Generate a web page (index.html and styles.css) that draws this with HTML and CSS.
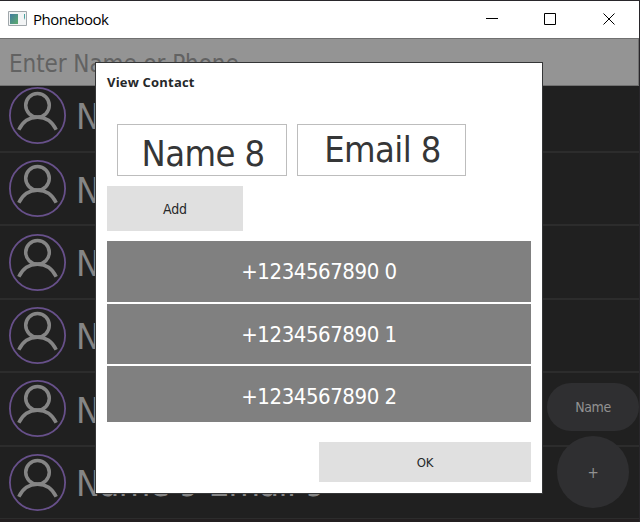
FILE: index.html
```html
<!DOCTYPE html>
<html lang="en">
<head>
<meta charset="utf-8">
<title>Phonebook</title>
<link rel="stylesheet" href="styles.css">
</head>
<body>
<svg width="0" height="0" class="defs"><symbol id="person" viewBox="0 0 57 57"><circle cx="28.500" cy="28.500" r="27.600" fill="none" stroke="#67508a" stroke-width="1.8"/><g fill="none" stroke="#858585" stroke-width="3.5"><circle cx="28.500" cy="18.300" r="11.800"/><path d="M9.800 42.800C14 34 21 30.300 28.500 30.300s14.500 3.700 18.700 12.500"/></g></symbol></svg>
<div class="window">
  <header class="titlebar">
    <svg class="appicon" width="19" height="15" viewBox="0 0 19 15"><defs><linearGradient id="g" x2="1" y2="1"><stop stop-color="#407ba0"/><stop offset="1" stop-color="#5dac6c"/></linearGradient></defs><path d="M.5.5h18v14H.5z" fill="#f2f4f5" stroke="#a0a7ab"/><path d="M2 3h8v10H2z" fill="url(#g)"/><path d="M16 3h1v4l-1 2z" fill="#4ba3a0"/></svg>
    <span class="apptitle">Phonebook</span>
    <svg class="controls" width="130" height="14" viewBox="0 0 130 14" fill="none" stroke="#000"><path d="M0 5.500h12M58.500 .5h11v11h-11z"/><path d="M117.500 .5l11 11M128.500 .5l-11 11"/></svg>
  </header>
  <div class="search"><span>Enter Name or Phone</span></div>
  <main class="list">
    <div class="row"><svg class="avatar"><use href="#person"/></svg><span>Name 4 Email 4</span></div>
    <div class="row"><svg class="avatar"><use href="#person"/></svg><span>Name 5 Email 5</span></div>
    <div class="row"><svg class="avatar"><use href="#person"/></svg><span>Name 6 Email 6</span></div>
    <div class="row"><svg class="avatar"><use href="#person"/></svg><span>Name 7 Email 7</span></div>
    <div class="row"><svg class="avatar"><use href="#person"/></svg><span>Name 8 Email 8</span></div>
    <div class="row"><svg class="avatar"><use href="#person"/></svg><span>Name 9 Email 9</span></div>
  </main>
  <div class="floating"><div class="sort">Name</div><div class="plus">+</div></div>
  <section class="dialog">
    <h1>View Contact</h1>
    <div class="fields"><div class="field name">Name 8</div><div class="field email">Email 8</div></div>
    <div class="button add">Add</div>
    <div class="phones"><div>+1234567890 0</div><div>+1234567890 1</div><div>+1234567890 2</div></div>
    <div class="button ok">OK</div>
  </section>
</div>
</body>
</html>
```
FILE: styles.css
```css
* { box-sizing: border-box; }
body { margin: 0; font-family: "DejaVu Sans Condensed", "DejaVu Sans", sans-serif; font-stretch: condensed; }
.defs { position: absolute; }
.window { position: relative; width: 640px; height: 522px; overflow: hidden; background: #202020; border-top: 1px solid #29272b; border-right: 1px solid #29272b; display: flex; flex-direction: column; white-space: nowrap; }
.titlebar { height: 37px; flex: none; background: #fff; display: flex; align-items: center; padding-left: 8px; }
.appicon { margin-top: -2px; }
.apptitle { font: 15px/20px "Open Sans", sans-serif; letter-spacing: -.5px; margin-left: 6px; margin-top: -1px; }
.controls { margin-left: auto; margin-right: 23px; }
.search { height: 48px; flex: none; background: #949494; border: 1px solid #707070; border-left: 0; display: flex; align-items: center; padding: 3px 0 0 9px; font-size: 24px; color: #626262; letter-spacing: -.08px; }
.list { flex: 1; overflow: hidden; background: #231f20; }
.row { height: 73.4px; border-bottom: 2px solid #2c2c2c; background: #202020; display: flex; align-items: center; padding-left: 9px; font-size: 36px; color: #858585; letter-spacing: -.6px; }
.row:first-child { margin-top: -6.400px; }
.row:last-child { height: 72.400px; border-bottom-width: 1px; }
.row span { margin: 3px 0 0 10px; }
.avatar { width: 57px; height: 57px; flex: none; }
.floating { position: absolute; left: 547px; top: 382px; width: 92px; display: flex; flex-direction: column; align-items: center; gap: 5px; font-size: 14px; color: #929292; letter-spacing: -.4px; }
.sort { width: 92px; height: 48px; line-height: 48px; border-radius: 24px; background: #2f2f31; text-align: center; }
.plus { width: 72px; height: 72px; line-height: 74px; border-radius: 50%; background: #2f2f31; text-align: center; font-size: 15px; }
.dialog { position: absolute; left: 95px; top: 61px; width: 448px; height: 432px; border: 1px solid #353637; background: #fff; color: #353637; padding: 11px 11px 0; display: flex; flex-direction: column; }
h1 { margin: 0; font: bold 13px/16px "Open Sans", sans-serif; color: #26282a; height: 50px; letter-spacing: .2px; }
.fields { display: flex; gap: 10px; padding-left: 10px; }
.field { height: 52px; border: 1px solid #bdbdbd; font-size: 36px; text-align: center; letter-spacing: -.6px; }
.name { width: 170px; line-height: 57px; padding-left: 2px; }
.email { width: 169px; line-height: 50px; padding-left: 2px; }
.button { background: #e0e0e0; text-align: center; color: #26282a; font-size: 14px; letter-spacing: -.1px; }
.add { width: 136px; height: 45px; line-height: 46px; margin-top: 10px; }
.phones { height: 181px; margin-top: 10px; overflow: hidden; display: flex; flex-direction: column; gap: 2px; font-size: 22px; color: #fff; text-align: center; letter-spacing: -.45px; }
.phones div { height: 60.500px; line-height: 61px; flex: none; background: #808080; }
.ok { width: 212px; height: 40px; line-height: 41px; margin: 20px 0 0 auto; font-size: 13px; }
```
